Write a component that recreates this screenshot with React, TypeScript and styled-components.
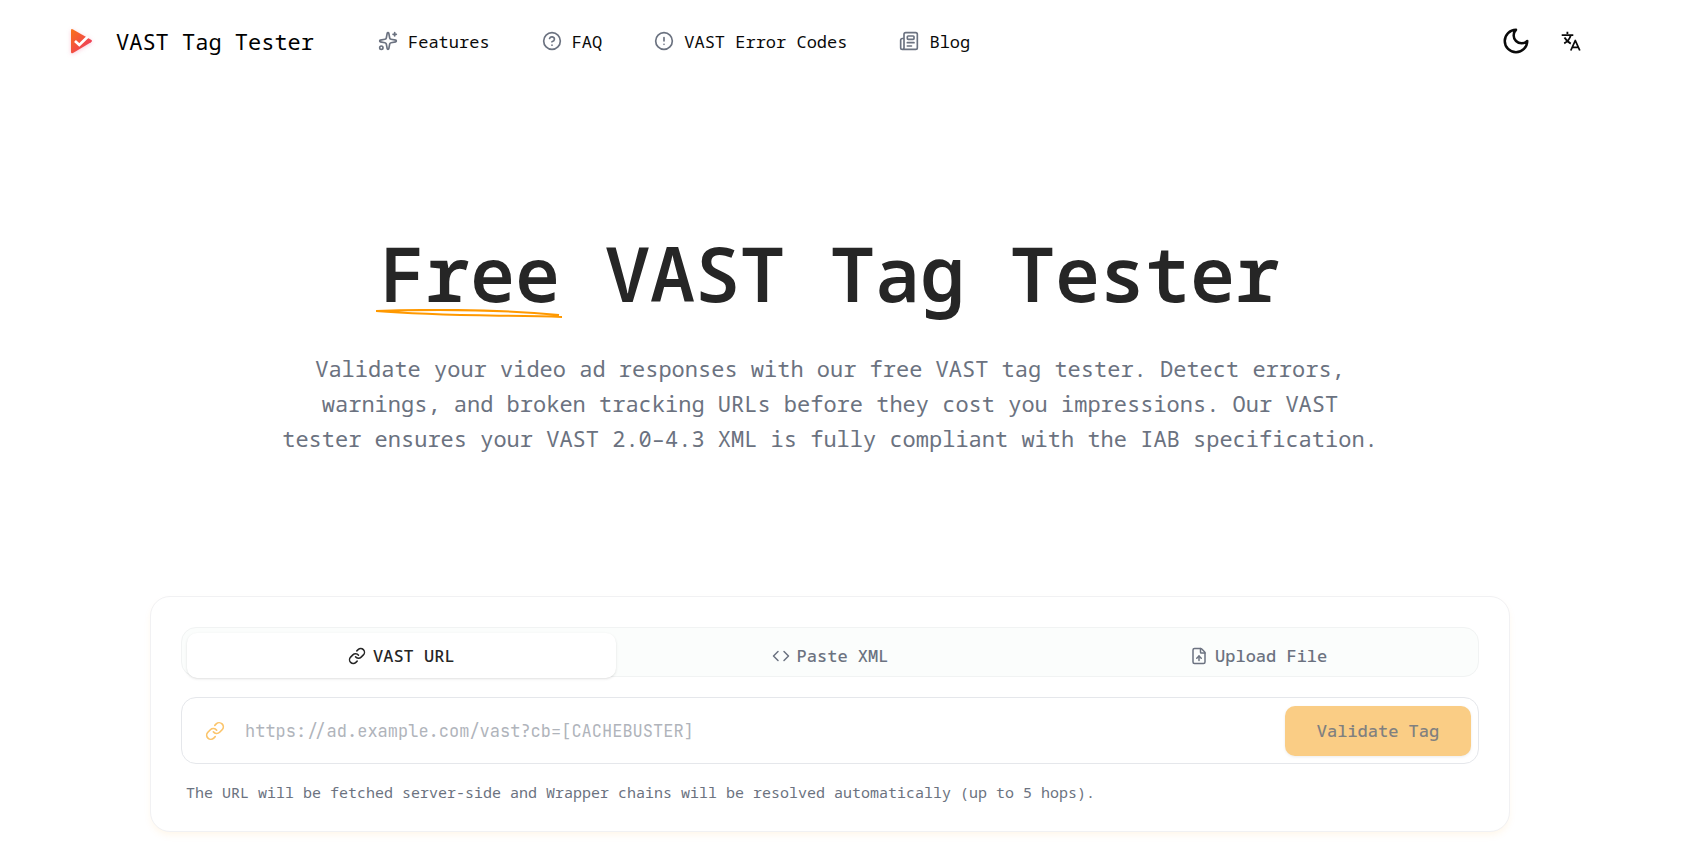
import React, { useState } from "react";
import styled, { createGlobalStyle, css } from "styled-components";
import { Sparkles, CircleHelp, CircleAlert, Newspaper, Link, Code, FileUp } from "lucide-react";

const mono = '"Noto Sans Mono", "DejaVu Sans Mono", monospace';
const codeMono = '"JetBrains Mono", "Noto Sans Mono", "DejaVu Sans Mono", monospace';

const GlobalStyle = createGlobalStyle`
  *, *::before, *::after { box-sizing: border-box; }
  body { margin: 0; background: #fff; color: #0a0a0a; font-family: ${mono}; font-size: 17px; }
  button, input { font: inherit; color: inherit; }
`;

const Page = styled.div`
  padding-right: 34px;
  padding-bottom: 32px;
`;

const Header = styled.header`
  display: flex;
  align-items: center;
  justify-content: space-between;
  height: 82px;
  padding: 0 79px 0 66px;
`;

const HeaderStart = styled.div`
  display: flex;
  align-items: center;
  gap: 64px;
`;

const Brand = styled.a`
  display: flex;
  align-items: center;
  gap: 20px;
  color: #000;
  font-size: 22px;
  text-decoration: none;
  white-space: nowrap;
`;

const BrandMark = styled.svg`
  filter: drop-shadow(0 1px 2px rgba(236, 47, 107, 0.25));
`;

const Nav = styled.nav`
  display: flex;
  align-items: center;
  gap: 52px;
`;

const NavLink = styled.a`
  display: flex;
  align-items: center;
  gap: 10px;
  color: inherit;
  text-decoration: none;
  white-space: nowrap;
  svg { color: #6b7280; }
`;

const HeaderActions = styled.div`
  display: flex;
  align-items: center;
  gap: 30px;
`;

const IconButton = styled.button`
  display: flex;
  padding: 0;
  border: 0;
  background: none;
  cursor: pointer;
`;

const Hero = styled.section`
  display: flex;
  flex-direction: column;
  align-items: center;
  padding: 153px 40px 0;
  text-align: center;
`;

const Title = styled.h1`
  margin: 0;
  color: #262626;
  font-size: 75px;
  font-weight: 600;
  line-height: 76px;
`;

const Marked = styled.span`
  position: relative;
  display: inline-block;
`;

const Underline = styled.svg`
  position: absolute;
  left: -4px;
  bottom: -8px;
  width: calc(100% + 6px);
  height: 10px;
`;

const Lead = styled.p`
  max-width: 1100px;
  margin: 40px 0 0;
  color: #6b7280;
  font-size: 22px;
  line-height: 35px;
`;

const Card = styled.section`
  max-width: 1360px;
  margin: 140px auto 0;
  padding: 30px 30px 29px;
  border: 1px solid #f1f1f3;
  border-radius: 20px;
  background: #fff;
  box-shadow: 0 4px 8px -2px rgba(255, 153, 0, 0.1);
`;

const Tabs = styled.div`
  display: grid;
  grid-template-columns: repeat(3, 1fr);
  height: 50px;
  padding: 5px;
  border: 1px solid #f1f3f3;
  border-radius: 15px;
  background: #fbfdfc;
`;

const Tab = styled.button<{ $active: boolean }>`
  display: flex;
  align-items: center;
  justify-content: center;
  gap: 7px;
  height: 45px;
  border: 0;
  border-radius: 10px;
  background: none;
  color: #6b7280;
  font-weight: 500;
  cursor: pointer;
  ${(p) => p.$active && css`
    background: #fff;
    color: #262626;
    box-shadow: 0 1px 3px rgba(0, 0, 0, 0.1), 0 1px 2px -1px rgba(0, 0, 0, 0.1);
  `}
`;

const UrlField = styled.form`
  display: flex;
  align-items: center;
  gap: 20px;
  height: 67px;
  margin-top: 20px;
  padding: 0 7px 0 23px;
  border: 1px solid #e5e7eb;
  border-radius: 15px;
`;

const FieldLabel = styled.label`
  display: flex;
  color: #fbc46a;
`;

const UrlInput = styled.input`
  flex: 1;
  min-width: 0;
  padding: 0;
  border: 0;
  outline: 0;
  background: none;
  font-family: ${codeMono};
  &::placeholder { color: #b0b4bb; opacity: 1; }
`;

const SubmitButton = styled.button`
  min-width: 186px;
  height: 50px;
  padding: 0 30px;
  border: 0;
  border-radius: 10px;
  background: #facd85;
  color: #808080;
  font-weight: 500;
  box-shadow: 0 1px 3px rgba(0, 0, 0, 0.08);
`;

const Hint = styled.p`
  margin: 18px 5px 0;
  color: #6b7280;
  font-size: 15px;
  line-height: 20px;
`;

const links = [
  { label: "Features", Icon: Sparkles },
  { label: "FAQ", Icon: CircleHelp },
  { label: "VAST Error Codes", Icon: CircleAlert },
  { label: "Blog", Icon: Newspaper },
];

const tabs = [
  { label: "VAST URL", Icon: Link },
  { label: "Paste XML", Icon: Code },
  { label: "Upload File", Icon: FileUp },
];

export default function App() {
  const [active, setActive] = useState(0);
  return (
    <Page>
      <GlobalStyle />
      <Header>
        <HeaderStart>
          <Brand href="#">
            <BrandMark width="30" height="30" viewBox="0 0 30 30" aria-hidden="true">
              <defs>
                <linearGradient id="brand" x1="0" y1="0" x2="1" y2="1">
                  <stop offset="0" stopColor="#f97316" />
                  <stop offset="1" stopColor="#ec2f6b" />
                </linearGradient>
              </defs>
              <path d="M5 4.500Q5 2.500 7 3.400L25 13.800Q27 15 25 16.200L7 27Q5 28 5 26Z" fill="url(#brand)" />
              <path d="M9 15l4.300 4L22 10.500" fill="none" stroke="#fff" strokeWidth="2.700" />
            </BrandMark>
            VAST Tag Tester
          </Brand>
          <Nav>
            {links.map(({ label, Icon }) => (
              <NavLink href="#" key={label}><Icon size={20} />{label}</NavLink>
            ))}
          </Nav>
        </HeaderStart>
        <HeaderActions>
          <IconButton aria-label="Toggle theme">
            <svg width="30" height="30" viewBox="0 0 24 24" fill="none" stroke="currentColor" strokeWidth="2" strokeLinecap="round" strokeLinejoin="round"><path d="M12 3a6 6 0 0 0 9 9 9 9 0 1 1-9-9Z" /></svg>
          </IconButton>
          <IconButton aria-label="Change language">
            <svg width="20" height="20" viewBox="0 0 20 20" fill="none" stroke="currentColor" strokeWidth="1.800">
              <path d="M.700 4.200h11.600M6.400.800v2.200M9.700 4.500C8.700 7.800 6.500 10.600 3.200 12.400M3.500 6.500C5 9.300 7 11.200 9.800 12.600M9.800 19.500l4.500-10 4.500 10M11.500 16.400h5.600" strokeLinejoin="round" />
            </svg>
          </IconButton>
        </HeaderActions>
      </Header>
      <Hero>
        <Title>
          <Marked>
            Free
            <Underline viewBox="0 0 186 10" preserveAspectRatio="none" aria-hidden="true">
              <path d="M0 2C60 0 130 1 183 6M0 2C60 7 120 6 186 8" fill="none" stroke="#f90" strokeWidth="2" />
            </Underline>
          </Marked>{" "}
          VAST Tag Tester
        </Title>
        <Lead>
          Validate your video ad responses with our free VAST tag tester. Detect errors, warnings, and broken tracking URLs before they cost you impressions. Our VAST tester ensures your VAST 2.0–4.3 XML is fully compliant with the IAB specification.
        </Lead>
      </Hero>
      <Card>
        <Tabs role="tablist">
          {tabs.map(({ label, Icon }, i) => (
            <Tab key={label} role="tab" aria-selected={active === i} $active={active === i} onClick={() => setActive(i)}>
              <Icon size={18} />{label}
            </Tab>
          ))}
        </Tabs>
        <UrlField onSubmit={(e) => e.preventDefault()}>
          <FieldLabel htmlFor="tag-url" aria-label="VAST tag URL"><Link size={20} /></FieldLabel>
          <UrlInput id="tag-url" type="url" placeholder="https://ad.example.com/vast?cb=[CACHEBUSTER]" />
          <SubmitButton type="submit" disabled>Validate Tag</SubmitButton>
        </UrlField>
        <Hint>The URL will be fetched server-side and Wrapper chains will be resolved automatically (up to 5 hops).</Hint>
      </Card>
    </Page>
  );
}
